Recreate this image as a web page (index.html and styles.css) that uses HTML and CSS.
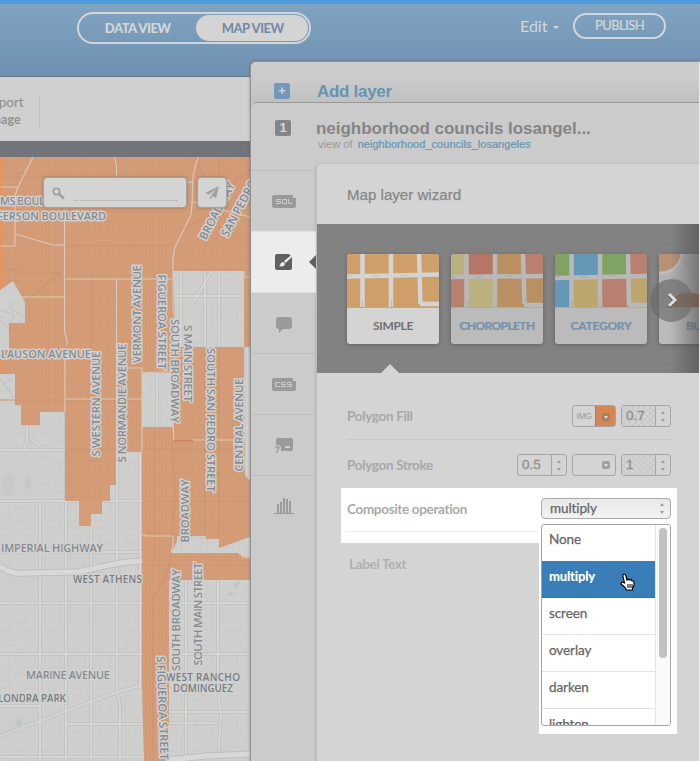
FILE: index.html
```html
<!DOCTYPE html>
<html lang="en">
<head>
<meta charset="utf-8">
<title>Map view</title>
<link rel="stylesheet" href="styles.css">
</head>
<body>
<div class="app">
  <header class="topbar">
    <nav class="switch"><span class="tab">DATA VIEW</span><span class="tab on">MAP VIEW</span></nav>
    <div class="edit">Edit <i class="caret"></i></div>
    <div class="publish">PUBLISH</div>
  </header>
  <div class="toolbar"><div class="export"><span>xport</span><b>nage</b></div></div>
  <div class="band"></div>
  <main class="map">
    <svg class="mapsvg" width="250" height="604" viewBox="0 157 250 604">
      <defs>
        <pattern id="blocks" width="25.3" height="51" patternUnits="userSpaceOnUse" x="14.5" y="501">
          <path d="M5 0V24M10 0V51M15 24V51M20 0V35M0 7H10M10 13H25M0 20H15M5 27H25M0 34H20M10 42H25M0 46H10" fill="none" stroke="#c1c3c4" stroke-width=".8"/>
        </pattern>
        <pattern id="weave" width="13" height="12" patternUnits="userSpaceOnUse">
          <path d="M3 0V12M6.5 0V12M10 0V12M0 5H13" fill="none" stroke="#c9926f" stroke-width=".6"/>
        </pattern>
      </defs>
      <path fill="#cfcfce" d="M0 157h250v604H0z"/>
      <path fill="url(#blocks)" opacity=".55" d="M0 157h250v604H0z"/>
      <path fill="#cccecc" d="M0 400L15 390V445L25 450L22 470V450H0zM0 455H38V498H0zM0 577H38V590H0zM0 706H36L40 722L0 735z"/>
      <ellipse cx="8" cy="485" rx="5" ry="11" fill="#c9cac9" stroke="#c3c4c3"/>
      <ellipse cx="28" cy="483" rx="3" ry="7" fill="#c6c7c6"/>
      <path fill="#bfc4c5" d="M16 721l4-3 2 6-3 3-4-2zM227 594l5-3 1 4-5 2zM234 583l6-2-1 5-5 3z"/>
      <path fill="none" stroke="#bfc0c1" d="M0 310l14 5-6 14 15-9M1 320l9 10M15 300l-5 8 14 9M2 385l11-7M0 378l14 20"/>
      <g fill="none" stroke-linejoin="round">
        <path stroke="#bfc0c1" stroke-width="3.600" d="M0 450H142M0 501H142M0 552H142M0 603H142M169 603H250M0 654H142M169 654H250M0 706H40M66 724H142M169 712H250M169 723H218M40 500V761M66 412V761M91 526V761M117 452V690M140 452V690M218 580V690L221 713 218 761M186 580V761M27 424V440L24 450M30 438L40 446V450M0 736L117 692L140 686M117 691L120 705V761M0 757H142M205 272V347M219 272V347M173 296H244M193 303L211 272M157 373V427M181 272V347"/>
        <path stroke="#d5d5d4" stroke-width="2" d="M0 450H142M0 501H142M0 552H142M0 603H142M169 603H250M0 654H142M169 654H250M0 706H40M66 724H142M169 712H250M169 723H218M40 500V761M66 412V761M91 526V761M117 452V690M140 452V690M218 580V690L221 713 218 761M186 580V761M27 424V440L24 450M30 438L40 446V450M0 736L117 692L140 686M117 691L120 705V761M0 757H142M205 272V347M219 272V347M173 296H244M193 303L211 272M157 373V427M181 272V347"/>
        <path stroke="#bdbebf" stroke-width="7" d="M0 566C8 573 16 574 27 573L76 572C90 571 115 561 142 561M160 761L205 756 250 754"/>
        <path stroke="#d8d8d7" stroke-width="5" d="M0 566C8 573 16 574 27 573L76 572C90 571 115 561 142 561M160 761L205 756 250 754"/>
      </g>
      <g>
        <path fill="#d49c77" fill-rule="evenodd" d="M0 157H250V347H244V271H173L175 320V373H142V427H173L174 440H193L250 440V537L219 548V539H206V536H177V541L171 553H238L243 558H250V580H169V761H144L142 690V452H116V485H110V501H102V514H91V526H79V501H65V412H40V425H21V405H15V374H0V350H9V323H25V302L18 290 13 281 0 290z"/>
        <path fill="#d49c77" d="M175 347H244V475L250 481V441H174V427V373H175z"/>
        <path fill="url(#weave)" d="M0 157H250V271H173V373H142V452H116V485H102V501H65V412H40V425H21V405H15V374H0V350H9V323H25V302L13 281 0 290zM142 427H173V347H244V470H250V535L219 548V539H177L169 553H250V580H169V761H144z" opacity=".5"/>
        <path fill="#cfd0cf" stroke="#bcbdbd" stroke-width=".7" d="M245 347H250V481L245 475z"/>
      </g>
      <g fill="none" stroke="#cb9371" stroke-width="1.1">
        <path d="M0 177H193M0 212H180M66 246H175M0 400H140M65 450H116M143 450H245M0 265L20 273H60L30 298M117 157V200M91 272V350M180 230L250 195M190 215L250 170M195 157L235 240M219 157V230M205 348V535M219 348V535M155 430V560M143 501H250M143 565H250M153 761V600C155 585 170 590 170 550L175 500 172 440"/>
      </g>
      <g fill="none" stroke="#d9c9be" stroke-width="1.1" stroke-linejoin="round">
        <path d="M0 187H18L33 157M18 187L15 196V246H0M15 234L53 245H64.500V210M64.500 245V332L67 340V345M65 279H244M22 297H65M116.500 279V452M115 157L116.500 165V190M198 157L193 175 192 205 191 215 175 247 173 258V310L175 320V370L172 373M175 182H193M193 202L250 217M244 271V277H250M65 399H142M127 368H142V452M65 355V412M142 373L160 372H173M173 427L174 440H245M142 535H145L146 536H173V545L171 552"/>
      </g>
      <path d="M174 440.500H193" stroke="#d28065" stroke-width="2"/>
      <path d="M248 157V347" stroke="#b88f75" stroke-width="3" opacity=".22"/>
      <path d="M.5 157V290M.5 350V374" stroke="#ed9055"/>
      <g class="labels">
        <text x="0" y="205" textLength="45">MS BOUL</text>
        <text x="-3" y="219.500" textLength="109">FERSON BOULEVARD</text>
        <text x="-5" y="358" textLength="96">SLAUSON AVENUE</text>
        <text x="1" y="552" textLength="102">IMPERIAL HIGHWAY</text>
        <text x="26" y="679" textLength="84">MARINE AVENUE</text>
        <g class="place">
          <text x="73" y="583" textLength="69">WEST ATHENS</text>
          <text x="-2" y="702" textLength="68">LONDRA PARK</text>
          <text x="166" y="681" textLength="74">WEST RANCHO</text>
          <text x="173" y="692" textLength="60">DOMINGUEZ</text>
        </g>
        <g class="mid">
          <text transform="translate(137 314) rotate(-90)" y="4" textLength="98">VERMONT AVENUE</text>
          <text transform="translate(162 322) rotate(90)" y="4" textLength="95">FIGUEROA STREET</text>
          <text transform="translate(175 371) rotate(90)" y="4" textLength="104">SOUTH BROADWAY</text>
          <text transform="translate(188 363.500) rotate(90)" y="4" textLength="77">S MAIN STREET</text>
          <text transform="translate(211 420) rotate(90)" y="4" textLength="144">SOUTH SAN PEDRO STREET</text>
          <text transform="translate(239 425) rotate(-90)" y="4" textLength="93">CENTRAL AVENUE</text>
          <text transform="translate(96 404) rotate(-90)" y="4" textLength="105">S WESTERN AVENUE</text>
          <text transform="translate(121.500 403) rotate(-90)" y="4" textLength="119">S NORMANDIE AVENUE</text>
          <text transform="translate(185 511) rotate(-90)" y="4" textLength="63">BROADWAY</text>
          <text transform="translate(176 620) rotate(-90)" y="4" textLength="102">SOUTH BROADWAY</text>
          <text transform="translate(198 614) rotate(-90)" y="4" textLength="103">SOUTH MAIN STREET</text>
          <text transform="translate(162.500 708) rotate(88)" y="4" textLength="104">S FIGUEROA STREET</text>
          <text transform="translate(217 211) rotate(-62)" y="4" textLength="63">BROADWAY</text>
          <text transform="translate(239 208) rotate(-62)" y="4" textLength="63">SAN PEDRO</text>
        </g>
      </g>
    </svg>
    <div class="maptools">
      <div class="search">
        <svg width="14" height="14" viewBox="0 0 14 14"><circle cx="4.500" cy="4.500" r="3.200" fill="none" stroke="#a0a0a0" stroke-width="1.800"/><path d="M7 7L12 11.500" stroke="#a0a0a0" stroke-width="2.500"/></svg>
        <span class="dots"></span>
      </div>
      <div class="send"><svg width="15" height="15" viewBox="0 0 15 15"><path fill="#a2a2a2" d="M14 1L0 8 4 9.500 11 4 6 10.500 11 13zM5 11V14.500L7.500 12z"/></svg></div>
    </div>
  </main>
</div>

<aside class="addpanel">
  <div class="addhead"><span class="plus">+</span><span>Add layer</span></div>
  <section class="layer">
    <div class="layerhead">
      <span class="num">1</span>
      <div><h1>neighborhood councils losangel...</h1><p>view of <a>neighborhood_councils_losangeles</a></p></div>
    </div>
    <div class="body">
      <nav class="side">
        <div class="item"><svg width="24" height="13" viewBox="0 0 24 13"><path fill="#9a9a9a" d="M2 0H21V3H24V11Q24 13 22 13H2Q0 13 0 11V2Q0 0 2 0"/><path fill="none" stroke="#cbcbcb" d="M9 4.500H4.500V6.500H8.500V8.500H4M10.500 4.500H14.500V8.500H10.500zM13 8V10M16.500 4V8.500H20"/></svg></div>
        <div class="item active"><svg width="17" height="17" viewBox="0 0 17 17"><path fill="#606060" d="M2 0H14L17 3V14Q17 16 15 16H2Q0 16 0 14V2Q0 0 2 0"/><path fill="#ececec" d="M16.500 1L9 7 10.500 9 17 3zM8 8C5 8 6 11 4 12C7 13 10 12 10 9.500z"/></svg><svg class="notch" width="7" height="14" viewBox="0 0 7 14"><path fill="#606060" d="M7 0V14L0 7z"/></svg></div>
        <div class="item"><svg width="16" height="16" viewBox="0 0 16 16"><path fill="#9a9a9a" d="M3 0H13Q16 0 16 3V9Q16 12 13 12H7L3 16V12Q0 12 0 9V3Q0 0 3 0"/></svg></div>
        <div class="item"><svg width="24" height="13" viewBox="0 0 24 13"><path fill="#9a9a9a" d="M2 0H21V3H24V11Q24 13 22 13H2Q0 13 0 11V2Q0 0 2 0"/><path fill="none" stroke="#cbcbcb" d="M8 4.500H3.500V8.500H8M14 4.500H9.500V6.500H13.500V8.500H9M20 4.500H15.500V6.500H19.500V8.500H15"/></svg></div>
        <div class="item"><svg width="18" height="15" viewBox="0 0 18 15"><path fill="#9a9a9a" d="M3 0H16Q18 0 18 2V11Q18 13 16 13H6V9L4 7H1V2Q1 0 3 0"/><path fill="#cbcbcb" d="M10 8h5v2h-5z"/><path fill="none" stroke="#9a9a9a" stroke-width="1.500" d="M0 10Q2 7.500 4 9.500Q4 11 2 12M2 13V15"/></svg></div>
        <div class="item"><svg width="20" height="16" viewBox="0 0 20 16"><path fill="#9a9a9a" d="M0 15H20V16H0zM3 6H5V15H3zM6 4H8V15H6zM9 0H11V15H9zM12 1H14V15H12zM15 3H17V15H15z"/></svg></div>
      </nav>
      <div class="wizard">
        <h2>Map layer wizard</h2>
        <div class="carousel">
          <div class="card sel"><svg width="92" height="53"><path fill="#ce9f68" d="M0 0h92v53H0z"/><path d="M15.500 0V53M44 0V53M72 0L73.500 50M0 22.500L92 20.500M73 50H92" fill="none" stroke="#d4d4d4" stroke-width="4.500"/><path d="M0 22H5M25 22H33M53 21.500H60M15.500 46V53M44.500 46V53" stroke="#bdbdbd"/></svg><span>SIMPLE</span></div>
          <div class="card"><svg width="92" height="53"><path fill="#bbb07f" d="M0 0h92v53H0z"/><path fill="#b77566" d="M15 0h29v22H15z"/><path fill="#ba8f61" d="M44 0h29v53H44z"/><path fill="#b8806e" d="M73 0h19v22H73zM0 22h15v31H0z"/><path fill="#ba8f61" d="M73 22h19v31H73z"/><path d="M15.500 0V53M44 0V53M72 0L73.500 50M0 23L92 22M73 51H92" fill="none" stroke="#b9b9b9" stroke-width="4.500"/><path d="M0 23H5M25 23H33M54 22H62M17 47V53M45 46V53" stroke="#a8a8a8"/></svg><span>CHOROPLETH</span></div>
          <div class="card"><svg width="92" height="53"><path fill="#bba76e" d="M0 0h92v53H0z"/><path fill="#80a263" d="M0 0h15v22H0zM44 0h29v22H44z"/><path fill="#6598b7" d="M17 0h27v22H17zM0 24h15v29H0z"/><path fill="#b8806e" d="M73 0h19v22H73zM46 22h26v31H46z"/><path d="M16.500 0V53M45 0V53M73 0L74 51M0 24L92 22M74 51H92" fill="none" stroke="#b9b9b9" stroke-width="4.500"/><path d="M0 23H5M25 23H33M54 22H62M17 47V53M45 46V53" stroke="#a8a8a8"/></svg><span>CATEGORY</span></div>
          <div class="card bubble"><svg width="92" height="53"><path fill="#b3b3b3" d="M0 0h92v53H0z"/><path fill="none" stroke="#a3a3a3" stroke-width=".6" d="M8 35L33 4L44 12M22 0L34 20L45 27M13 23L28 29M5 24L20 42"/><circle r="21" cy="-2" cx="2" fill="#b99276" stroke="#bdbdbd" stroke-width="3"/><circle r="26" cx="30" cy="63" fill="#a87052" stroke="#b4b4b4" stroke-width="3"/></svg><span>BUBBLE</span></div>
          <div class="fade"></div>
          <div class="next"><svg width="11" height="17" viewBox="0 0 11 17"><path d="M2 3L8 9L2 15" fill="none" stroke="#444" stroke-width="3"/><path d="M2 2L8 8L2 14" fill="none" stroke="#ddd" stroke-width="3"/></svg></div>
          <i class="pointer"></i>
        </div>
        <div class="row fill"><label>Polygon Fill</label>
          <div class="controls"><div class="color"><span>IMG</span><b><i class="drop"></i></b></div><div class="spin check"><span>0.7</span><i class="arrows"></i></div></div>
        </div>
        <div class="row stroke"><label>Polygon Stroke</label>
          <div class="controls"><div class="spin"><span>0.5</span><i class="arrows"></i></div><div class="color empty"><i class="drop"></i></div><div class="spin check"><span>1</span><i class="arrows"></i></div></div>
        </div>
        <div class="row comp"><label>Composite operation</label>
          <div class="select"><span>multiply</span><i class="arrows"></i></div>
          <div class="menuwrap"><div class="menu"><div class="options"><div>None</div><div class="hover">multiply</div><div>screen</div><div>overlay</div><div>darken</div><div>lighten</div></div><div class="scroll"><i></i></div></div>
            <svg class="hand" width="16" height="18" viewBox="0 0 16 18"><path d="M4.500 10L2.800 3Q2.800 1 4.300 1 5.300 1 6 3L7 7 8 6 9.500 7 11 6.500 12 8 13.500 8 14.200 10V12L12.500 15V17H6.500L5 14.500 1 11Q1 9 3 9.300z" fill="#fff" stroke="#000" stroke-width="1.200"/><path d="M8 11V15M10 11V15M12 11V15" stroke="#000"/></svg>
          </div>
        </div>
        <div class="row labeltext"><label>Label Text</label></div>
      </div>
    </div>
  </section>
  <i class="rim"></i>
</aside>
</body>
</html>
```
FILE: styles.css
```css
* { box-sizing: border-box; }
body { margin: 0; width: 700px; height: 761px; overflow: hidden; position: relative; font-family: Lato, "Liberation Sans", sans-serif; }
h1, h2, p { margin: 0; }
svg { display: block; }
.app { display: flex; flex-direction: column; height: 761px; }

.topbar { height: 77px; border-top: 4px solid #4d9bdc; border-bottom: 1px solid #65798f; background: linear-gradient(#7fa4c1, #7090b1); display: flex; align-items: flex-start; padding: 8px 34px 0 77px; color: #d6d6d6; }
.switch { display: flex; width: 234px; height: 32px; border: 2px solid #d2d6da; border-radius: 16px; padding: 1px; font-size: 13px; font-weight: 900; line-height: 27px; text-align: center; letter-spacing: -.5px; }
.tab { width: 117px; padding-right: 1px; }
.tab.on { width: 112px; background: #d4d4d4; color: #7188a3; border-radius: 14px; font-weight: 700; letter-spacing: -.45px; padding: 0 0 0 1px; }
.edit { margin-left: 209px; width: 53px; font-size: 16px; line-height: 28px; display: flex; align-items: center; gap: 6px; }
.caret { border: 3px solid transparent; border-top-color: #d6d6d6; border-bottom: 0; margin-top: 2px; }
.publish { width: 93px; height: 26px; margin-top: 1px; border: 2px solid #d2d6da; border-radius: 13px; text-align: center; font-size: 13px; line-height: 21px; letter-spacing: -.55px; -webkit-text-stroke: .2px #d6d6d6; }
.toolbar { height: 64px; background: #d0d0d0; padding-top: 17px; }
.export { width: 40px; height: 34px; border-right: 1px solid #c0c0c0; font-size: 13.5px; line-height: 18px; color: #929292; display: flex; flex-direction: column; margin-top: 1px; }
.export span { margin: -2px 0 0 -8px; -webkit-text-stroke: .2px #929292; }
.export b { margin-left: -6px; font-size: 12.5px; }
.band { height: 16px; background: #71757a; }
.map { height: 604px; width: 250px; position: relative; overflow: hidden; }
.labels text { font-family: "Open Sans", "Noto Sans", sans-serif; font-size: 11px; font-weight: 600; fill: #848c94; stroke: #d3d1cf; stroke-width: 3px; stroke-linejoin: round; paint-order: stroke; }
.labels .mid text { text-anchor: middle; font-size: 11.5px; }
.labels .place text { font-size: 10px; fill: #777d83; stroke: #d0d0cf; }
.maptools { position: absolute; left: 43px; top: 20px; display: flex; gap: 10px; }
.search, .send { height: 31px; background: #d4d4d4; border: 1px solid #a3a3a3; border-radius: 4px; box-shadow: 0 0 3px #8b7a6e; display: flex; }
.search { width: 144px; padding: 9px 9px 6px 8px; gap: 8px; }
.dots { flex: 1; border-bottom: 1px dotted #a5a5a5; }
.send { width: 30px; align-items: center; justify-content: center; }

.addpanel { position: absolute; left: 250px; top: 61px; width: 450px; height: 700px; background: #cbcbcb; border: 1px solid #929292; border-width: 1px 0 0 1px; border-radius: 6px 0 0 0; box-shadow: 0 0 3px rgba(50,50,50,.4); overflow: hidden; }
.addhead { height: 40px; background: linear-gradient(#cbcbcb 45%, #c0c0c0); display: flex; padding: 18px 0 0 23px; gap: 27px; color: #6496b2; font: bold 17px/24px "Liberation Sans", sans-serif; letter-spacing: -.3px; }
.plus, .num { width: 16px; height: 16px; border-radius: 2px; color: #d5d5d5; font: bold 13px/15px "Liberation Sans", sans-serif; text-align: center; letter-spacing: 0; }
.plus { background: #7099bd; margin-top: 3px; }
.num { background: #858585; margin-top: 17px; }
.layer { background: #cbcbcb; border-top: 1px solid #999; border-radius: 6px 0 0 0; height: 660px; }
.layerhead { height: 61px; display: flex; gap: 25px; padding-left: 24px; }
.layerhead h1 { font: bold 17px/20px "Liberation Sans", sans-serif; color: #858585; margin-top: 16px; letter-spacing: -.03px; white-space: nowrap; }
.layerhead p { font: 11px/13px "Liberation Sans", sans-serif; color: #999; padding-left: 2px; margin-top: -1px; letter-spacing: .04px; }
.layerhead a { color: #6496b2; margin-left: 2px; -webkit-text-stroke: .2px #6496b2; }
.body { display: flex; height: 598px; }
.side { width: 65px; padding-top: 6px; }
.item { height: 61px; border-top: 1px solid #bdbdbd; display: flex; align-items: center; justify-content: center; position: relative; }
.item.active { background: #ececec; border: 1px solid #e1e1e1; height: 62px; }
.item.active + .item { height: 60px; border-top: 0; padding-top: 3px; }
.notch { position: absolute; right: -1px; top: 23px; }
.wizard { width: 384px; background: #d4d4d4; border-left: 1px solid #bdbdbd; border-radius: 5px 0 0 0; box-shadow: -1px 0 2px #b6b6b6; }
.wizard h2 { height: 60px; padding-left: 30px; font: 15.1px/61px "Liberation Sans", sans-serif; color: #888; -webkit-text-stroke: .25px #888; }
.carousel { height: 149px; background: repeating-linear-gradient(90deg, rgba(0,0,0,.018) 0 1px, transparent 1px 4px), repeating-linear-gradient(rgba(0,0,0,.02) 0 1px, transparent 1px 5px), #838383; padding: 30px 0 0 30px; display: flex; gap: 12px; position: relative; overflow: hidden; }
.card { flex: 0 0 92px; height: 90px; background: #bbb; border-radius: 3px; box-shadow: 0 1px 4px rgba(0,0,0,.25); overflow: hidden; color: #7590aa; font-size: 12px; font-weight: 700; text-align: center; line-height: 36px; letter-spacing: -.6px; -webkit-text-stroke: .2px #7590aa; }
.card.sel { background: #d4d4d4; color: #707070; letter-spacing: -.3px; -webkit-text-stroke: 0; }
.card:nth-child(3) { letter-spacing: -.25px; }
.card svg { border-bottom: 1px solid #aaa; height: 54px; }
.bubble span { display: block; margin-left: 4px; }
.fade { position: absolute; right: 0; top: 0; width: 30px; height: 149px; background: linear-gradient(90deg, transparent, rgba(75,75,75,.6)); }
.next { position: absolute; left: 333px; top: 55px; width: 43px; height: 43px; border-radius: 50%; background: rgba(105,105,105,.65); display: flex; align-items: center; justify-content: center; padding-left: 2px; }
.pointer { position: absolute; left: 64px; bottom: 0; border: 9px solid transparent; border-top: 0; border-bottom-color: #d4d4d4; }
.row { margin-left: 30px; width: 324px; display: flex; justify-content: space-between; position: relative; color: #a8a8a8; font-size: 13.5px; font-weight: 700; letter-spacing: -.33px; }
.row label { line-height: 20px; }
.fill { height: 67px; padding-top: 32px; border-bottom: 1px solid #c9c9c9; }
.fill label, .stroke label { margin-top: 1px; }
.stroke { height: 48px; padding-top: 14px; }
.controls { display: flex; gap: 5px; }
.spin, .color { height: 22px; border: 1px solid #a6a6a6; border-radius: 3px; display: flex; overflow: hidden; }
.spin { width: 50px; color: #8e8e8e; font: 13.5px/19px "Liberation Sans", sans-serif; -webkit-text-stroke: .3px #8e8e8e; letter-spacing: 0; }
.spin span { width: 34px; border-right: 1px solid #a6a6a6; padding-left: 4px; }
.check span { background: repeating-conic-gradient(#cacaca 0 25%, #d2d2d2 0 50%) 0 0 / 6px 6px; }
.arrows { width: 14px; display: flex; flex-direction: column; align-items: center; justify-content: center; gap: 5px; }
.arrows::before, .arrows::after { content: ""; border: 2px solid transparent; }
.arrows::before { border-bottom: 3px solid #9b9b9b; border-top: 0; }
.arrows::after { border-top: 3px solid #9b9b9b; border-bottom: 0; }
.color { width: 44px; justify-content: flex-end; }
.color span { width: 22px; text-align: center; font: 8.5px/20px "Liberation Sans", sans-serif; letter-spacing: -.3px; color: #999; }
.color b { flex: 1; background: #d48655; border-left: 1px solid #b97750; padding: 7px 0 0 6px; }
.drop { display: block; width: 8px; height: 8px; border-radius: 2px; background: #a0a0a0; position: relative; }
.color b .drop { background: #a9805f; }
.empty .drop { margin: 6px 5px 0 0; }
.drop::after { content: ""; position: absolute; left: 2px; top: 3px; border: 2px solid transparent; border-top: 3px solid #ddd; border-bottom: 0; }
.comp { width: 336px; height: 55px; margin-left: 24px; padding: 10px 6px 0; background: #fff; color: #aaa; }
.comp::after { content: ""; position: absolute; left: 6px; bottom: 11px; width: 194px; height: 1px; background: #eee; }
.comp label { margin-top: 1px; }
.select { width: 130px; height: 21px; border: 1px solid #aaa; border-radius: 4px; background: linear-gradient(#e9e9e9, #f2f2f2); padding: 0 1px 0 8px; display: flex; justify-content: space-between; color: #666; font-weight: 400; line-height: 18px; letter-spacing: -.1px; -webkit-text-stroke: .25px #666; }
.menuwrap { position: absolute; left: 198px; top: 33px; width: 138px; height: 213px; background: #fff; padding: 3px 6px 8px 2px; z-index: 2; }
.menu { display: flex; height: 202px; border: 1px solid #a5a5a5; border-radius: 3px; overflow: hidden; }
.options { width: 113px; color: #666; font-weight: 400; -webkit-text-stroke: .25px #666; letter-spacing: -.1px; }
.options div { height: 37px; padding-left: 7px; line-height: 30px; border-bottom: 1px solid #e3e3e3; }
.options div:first-child { height: 36px; border-bottom: 0; line-height: 28px; }
.options .hover { background: #397db9; border-bottom-color: #2d70aa; color: #fff; font-weight: 900; font-size: 13px; letter-spacing: -.2px; -webkit-text-stroke: 0; }
.scroll { flex: 1; border-left: 1px solid #e5e5e5; background: #fafafa; padding: 3px 0 0 3px; }
.scroll i { display: block; width: 8px; height: 130px; border-radius: 4px; background: #c1c1c1; }
.hand { position: absolute; left: 81px; top: 52px; }
.labeltext { padding: 11px 0 0 2px; color: #b0b0b0; }
.rim { position: absolute; right: 0; top: 0; width: 1px; height: 700px; background: #eee; }
```
